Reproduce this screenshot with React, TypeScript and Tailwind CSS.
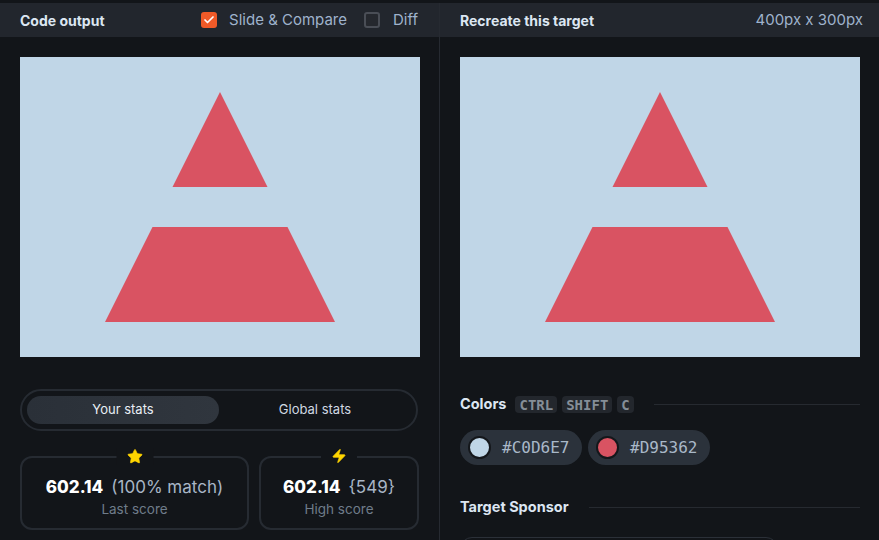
import { Check, Star, Zap } from 'lucide-react';

const FONT = { fontFamily: 'Inter, "Noto Sans", sans-serif' };
const MONO = { fontFamily: '"DejaVu Sans Mono", "Liberation Mono", monospace' };

function Target() {
  return (
    <svg width="400" height="300" viewBox="0 0 400 300" className="block shrink-0">
      <rect width="400" height="300" fill="#C0D6E7" />
      <polygon points="200,35 247.5,130 152.5,130" fill="#D95362" />
      <polygon points="132.5,170 267.5,170 315,265 85,265" fill="#D95362" />
    </svg>
  );
}

function StatCard({
  icon,
  value,
  extra,
  label,
  className,
}: {
  icon: React.ReactNode;
  value: string;
  extra: string;
  label: string;
  className: string;
}) {
  return (
    <div className={`relative h-[74px] rounded-xl border-2 border-[#262b32] ${className}`}>
      {/* Icon sits on top of the border */}
      <div className="absolute left-1/2 -top-[10px] -translate-x-1/2 bg-[#121519] px-[10px] flex items-center justify-center">
        {icon}
      </div>
      <div className="flex flex-col items-center pt-[17px]">
        <div className="flex items-baseline gap-[8px]">
          <span className="text-[17px] font-extrabold text-white">{value}</span>
          <span className="text-[17px] text-[#a8b6c6]">{extra}</span>
        </div>
        <div className="-mt-[2px] text-[13.5px] text-[#6f7c8a]">{label}</div>
      </div>
    </div>
  );
}

function Kbd({ children }: { children: React.ReactNode }) {
  return (
    <span
      className="h-[17px] px-[4px] rounded-[4px] bg-[#23272d] text-[14px] font-bold text-[#858e97] flex items-center leading-none"
      style={MONO}
    >
      {children}
    </span>
  );
}

function ColorPill({ hex }: { hex: string }) {
  return (
    <div className="h-[35px] w-[122px] rounded-full bg-[#2b323b] flex items-center pl-[8px] gap-[11px]">
      <span
        className="w-[23px] h-[23px] rounded-full border-2 border-[#14171b]"
        style={{ backgroundColor: hex }}
      />
      <span className="text-[16px] text-[#a9b8c8]" style={MONO}>
        {hex}
      </span>
    </div>
  );
}

export default function App() {
  return (
    <div className="w-[879px] h-[540px] bg-[#121519] pt-[3px] flex overflow-hidden" style={FONT}>
      {/* Left: code output */}
      <div className="w-[440px] shrink-0 border-r border-[#262a31] flex flex-col">
        <div className="h-[34px] shrink-0 bg-[#22262d] pl-5 pr-[21px] flex items-center justify-between">
          <span className="text-[14px] font-bold text-[#dce6f2]">Code output</span>
          <div className="flex items-center">
            <span className="w-4 h-4 rounded-[3px] bg-[#f05a28] flex items-center justify-center">
              <Check className="w-3 h-3 text-white" strokeWidth={3.5} />
            </span>
            <span className="ml-3 text-[15px] text-[#9fb3cc]">Slide &amp; Compare</span>
            <span className="ml-[17px] w-4 h-4 rounded-[3px] border-2 border-[#4a4e56] bg-[#25282e]" />
            <span className="ml-[13px] text-[15px] text-[#9fb3cc]">Diff</span>
          </div>
        </div>

        <div className="px-5 pt-5">
          <Target />

          {/* Stats switcher */}
          <div className="mt-8 h-[42px] w-[398px] rounded-full border-2 border-[#262b32] p-[5px] flex">
            <div className="w-[192px] h-full rounded-full bg-gradient-to-r from-[#2a3038] to-[#30363e] flex items-center justify-center text-[13px] text-[#e8eef5]">
              Your stats
            </div>
            <div className="flex-1 flex items-center justify-center text-[13px] text-[#d0d8e2]">
              Global stats
            </div>
          </div>

          {/* Score cards */}
          <div className="mt-[25px] flex gap-[10px]">
            <StatCard
              className="w-[229px]"
              icon={<Star className="w-[17px] h-[17px] text-[#ffd500]" fill="#ffd500" strokeWidth={1} />}
              value="602.14"
              extra="(100% match)"
              label="Last score"
            />
            <StatCard
              className="w-[160px]"
              icon={<Zap className="w-[16px] h-[16px] text-[#ffd500]" fill="#ffd500" strokeWidth={1} />}
              value="602.14"
              extra="{549}"
              label="High score"
            />
          </div>
        </div>
      </div>

      {/* Right: target */}
      <div className="flex-1 border-r border-[#2a2e35] flex flex-col">
        <div className="h-[34px] shrink-0 bg-[#22262d] pl-5 pr-[17px] flex items-center justify-between">
          <span className="text-[14px] font-bold text-[#dce6f2]">Recreate this target</span>
          <span className="text-[15px] text-[#9fb3cc]">400px x 300px</span>
        </div>

        <div className="px-5 pt-5">
          <Target />

          {/* Colors */}
          <div className="mt-[39px] h-[17px] flex items-center leading-none">
            <span className="text-[14.5px] font-bold text-[#dce6f2]">Colors</span>
            <div className="ml-[9px] flex gap-[5px]">
              <Kbd>CTRL</Kbd>
              <Kbd>SHIFT</Kbd>
              <Kbd>C</Kbd>
            </div>
            <div className="ml-[20px] flex-1 h-px bg-[#262a30]" />
          </div>

          <div className="mt-[17px] flex gap-[6px]">
            <ColorPill hex="#C0D6E7" />
            <ColorPill hex="#D95362" />
          </div>

          {/* Sponsor */}
          <div className="mt-[34px] h-[17px] flex items-center leading-none">
            <span className="text-[14.5px] font-bold text-[#dce6f2]">Target Sponsor</span>
            <div className="ml-[20px] flex-1 h-px bg-[#262a30]" />
          </div>

          <div className="mt-[21px] w-[318px] h-[40px] shrink-0 rounded-xl border border-[#2b3038]" />
        </div>
      </div>
    </div>
  );
}
